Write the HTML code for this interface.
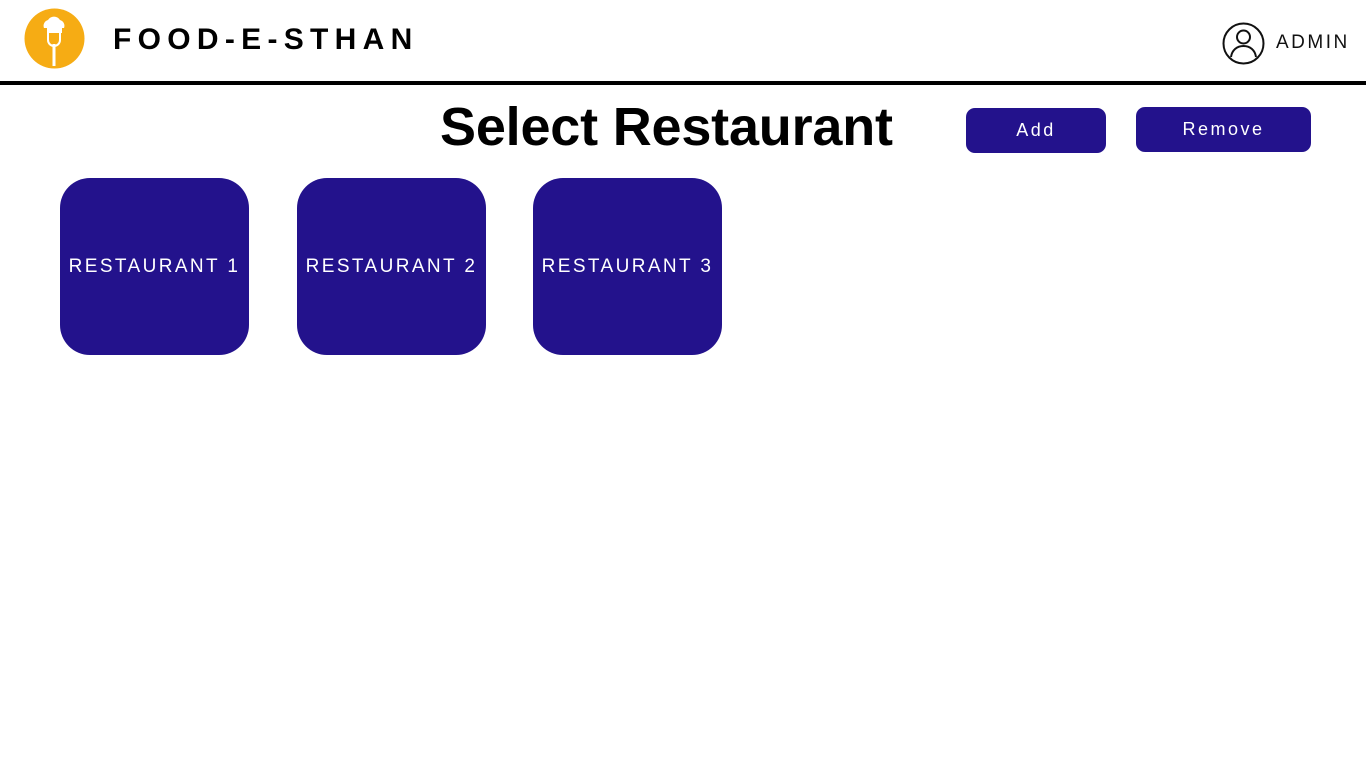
<!DOCTYPE html>
<html><head><style>
*{margin:0;padding:0;box-sizing:border-box}
body{width:1366px;height:768px;background:#fff;position:relative;overflow:hidden;font-family:"Liberation Sans",sans-serif}
.abs{position:absolute}
.title{left:113px;top:23px;font-size:30px;font-weight:bold;letter-spacing:6.3px;color:#000}
.line{left:0;top:81px;width:1366px;height:4px;background:#000}
.h1{left:440px;top:96px;font-size:54px;font-weight:bold;color:#000;letter-spacing:-0.2px}
.btn{background:#23128c;color:#fff;border-radius:9px;font-size:18px;letter-spacing:2.5px;display:flex;align-items:center;justify-content:center}
.card{top:178px;width:189px;height:177px;background:#23128c;border-radius:30px;color:#fff;font-size:19px;letter-spacing:2.4px;display:flex;align-items:center;justify-content:center}
</style></head><body>
<svg class="abs" style="left:24px;top:8px" width="61" height="61" viewBox="0 0 61 61">
<circle cx="30.5" cy="30.5" r="30" fill="#f6ac14"/>
<path d="M20 20a6 6 0 0 1 4-8 7 7 0 0 1 12 0 6 6 0 0 1 4 8z" fill="#fff"/>
<rect x="23" y="20" width="15" height="5" fill="#fff"/>
<path d="M24 24v8a6 6 0 0 0 12 0v-8" stroke="#fff" stroke-width="2" fill="none"/>
<rect x="28.5" y="36" width="3" height="22" fill="#fff"/>
<path d="M28 25v8M30 25v8M32 25v8" stroke="#f6ac14" stroke-width="1"/>
</svg>
<div class="abs title">FOOD-E-STHAN</div>
<svg class="abs" style="left:1222px;top:22px" width="43" height="43" viewBox="0 0 43 43">
<circle cx="21.5" cy="21.5" r="20" fill="none" stroke="#111" stroke-width="2"/>
<circle cx="21.5" cy="15" r="6.5" fill="none" stroke="#111" stroke-width="2"/>
<path d="M9 35c1-7 6-11 12.5-11S33 28 34 35" fill="none" stroke="#111" stroke-width="2"/>
</svg>
<div class="abs" style="left:1276px;top:32px;font-size:19px;letter-spacing:2.5px;color:#111">ADMIN</div>
<div class="abs line"></div>
<div class="abs h1">Select Restaurant</div>
<div class="abs btn" style="left:966px;top:108px;width:140px;height:45px">Add</div>
<div class="abs btn" style="left:1136px;top:107px;width:175px;height:45px">Remove</div>
<div class="abs card" style="left:60px">RESTAURANT 1</div>
<div class="abs card" style="left:297px">RESTAURANT 2</div>
<div class="abs card" style="left:533px">RESTAURANT 3</div>
</body></html>
